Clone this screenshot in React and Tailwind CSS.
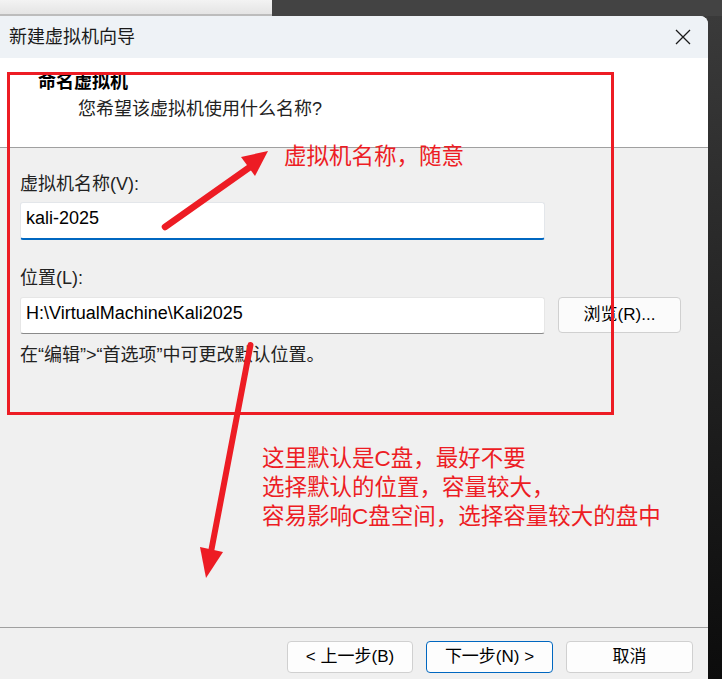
export default function App() {
  return (
    <div className="relative w-[722px] h-[679px] overflow-hidden flex flex-col bg-[#1c1c1c] font-['Liberation_Sans','Noto_Sans_CJK_SC',sans-serif] text-[18px] text-[#1a1a1a]">
      {/* desktop behind the dialog */}
      <div className="h-[16px] flex shrink-0">
        <div className="w-[272px] bg-gradient-to-b from-[#f3f3f3] to-[#e4e4e4] border-b-2 border-[#bcbcbc]" />
        <div className="flex-1 bg-[#434343]" />
      </div>

      <div className="flex flex-1 min-h-0 bg-[#3c3c3c]">
        <div className="w-[708px] flex flex-col rounded-tr-[8px] overflow-hidden bg-[#f0f0f0]">
          {/* title bar */}
          <div className="h-[42px] shrink-0 flex items-center justify-between pl-[9px] pr-[17px] bg-[#eef2f6]">
            <span className="text-[18px] leading-none">新建虚拟机向导</span>
            <svg width="16" height="16" viewBox="0 0 16 16" fill="none">
              <path d="M1 1 L15 15 M15 1 L1 15" stroke="#1a1a1a" strokeWidth="1.3" />
            </svg>
          </div>

          {/* header */}
          <div className="h-[90px] shrink-0 bg-white border-b border-[#a0a0a0] pt-[12px] pl-[38px]">
            <div className="leading-[24px] font-bold text-black">命名虚拟机</div>
            <div className="leading-[24px] mt-[3px] ml-[40px] text-[#222]">您希望该虚拟机使用什么名称?</div>
          </div>

          {/* body */}
          <div className="flex-1 px-[20px] pt-[24px]">
            <div className="leading-[24px] text-[#222]">虚拟机名称(V):</div>
            <div className="mt-[6px] w-[525px] h-[38px] bg-white border border-[#e3e6ea] border-b-2 border-b-[#0067c0] rounded-[3px] pl-[5px] pt-[1px] leading-[28px] text-black">
              kali-2025
            </div>

            <div className="mt-[26px] leading-[24px] text-[#222]">位置(L):</div>
            <div className="mt-[7px] flex items-start gap-[13px]">
              <div className="w-[525px] h-[37px] bg-white border border-[#e6e6e6] border-b-[#8a8a8a] rounded-[3px] pl-[5px] pt-[1px] leading-[28px] text-black">
                H:\VirtualMachine\Kali2025
              </div>
              <button className="w-[123px] h-[36px] bg-[#fbfbfb] border border-[#d0d0d0] rounded-[4px] text-[17px] text-black">
                浏览(R)...
              </button>
            </div>

            <div className="mt-[9px] leading-[24px] text-[18px] text-[#222]">在“编辑”&gt;“首选项”中可更改默认位置。</div>
          </div>

          {/* footer */}
          <div className="h-[52px] shrink-0 border-t border-[#a0a0a0] flex justify-end items-start pt-[13px] pr-[15px] gap-[13px]">
            <button className="w-[126px] h-[32px] bg-[#fdfdfd] border border-[#d0d0d0] rounded-[4px] text-[17px] text-black">
              &lt; 上一步(B)
            </button>
            <button className="w-[127px] h-[32px] bg-[#fdfdfd] border border-[#0067c0] rounded-[4px] text-[17px] text-black">
              下一步(N) &gt;
            </button>
            <button className="w-[127px] h-[32px] bg-[#fdfdfd] border border-[#d0d0d0] rounded-[4px] text-[17px] text-black">
              取消
            </button>
          </div>
        </div>
        <div className="flex-1 bg-gradient-to-b from-[#3a3a3a] via-[#222] to-[#0c0c0c]" />
      </div>

      {/* annotations laid over the screenshot */}
      <div className="absolute left-[7px] top-[72px] w-[607px] h-[343px] border-[3px] border-[#ed1c24]" />
      <svg className="absolute left-0 top-0" width="722" height="679" viewBox="0 0 722 679">
        <line x1="165" y1="227" x2="250" y2="167" stroke="#ed1c24" strokeWidth="6.5" strokeLinecap="round" />
        <polygon points="268,151 241,157 255,176" fill="#ed1c24" />
        <line x1="250.5" y1="345" x2="211" y2="552" stroke="#ed1c24" strokeWidth="6" strokeLinecap="round" />
        <polygon points="206,578 200,547 223,552" fill="#ed1c24" />
      </svg>
      <div className="absolute left-[284px] top-[143px] text-[22.5px] leading-[28px] text-[#ed1c24]">虚拟机名称，随意</div>
      <div className="absolute left-[262px] top-[444px] text-[22.5px] leading-[29px] text-[#ed1c24]">
        <div>这里默认是C盘，最好不要</div>
        <div>选择默认的位置，容量较大，</div>
        <div>容易影响C盘空间，选择容量较大的盘中</div>
      </div>
    </div>
  );
}
